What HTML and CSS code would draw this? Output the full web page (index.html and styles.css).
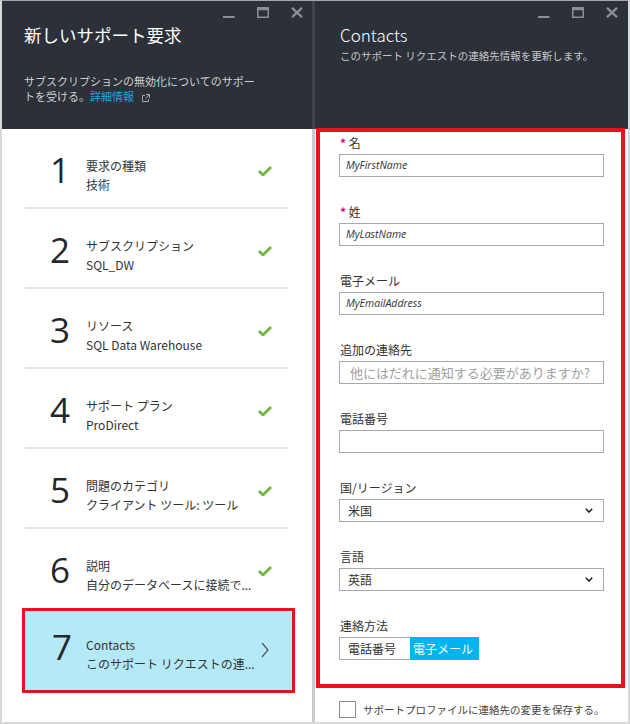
FILE: index.html
```html
<!DOCTYPE html>
<html lang="ja">
<head>
<meta charset="utf-8">
<title>新しいサポート要求</title>
<link rel="stylesheet" href="styles.css">
</head>
<body>
<div class="frame">
  <section class="blade blade-left">
    <header class="blade-head">
      <div class="controls">
        <svg class="ctl" viewBox="0 0 12 11" width="12" height="11"><rect x="0" y="9" width="11.5" height="2" fill="#8b8e93"/></svg>
        <svg class="ctl" viewBox="0 0 12 11" width="12" height="11"><path fill="#8b8e93" fill-rule="evenodd" d="M0 0H12V11H0Z M1.5 3.2H10.5V9.5H1.5Z"/></svg>
        <svg class="ctl" viewBox="0 0 12 11" width="12" height="11"><path stroke="#8b8e93" stroke-width="2.3" d="M1 0.8L11 10.2M11 0.8L1 10.2"/></svg>
      </div>
      <h1 class="title">新しいサポート要求</h1>
      <p class="desc"><span class="desc-line">サブスクリプションの無効化についてのサポー</span><span class="desc-line">トを受ける。<a class="link">詳細情報</a><svg class="ext" viewBox="0 0 8 8" width="8" height="8"><path fill="none" stroke="#a3a6ab" stroke-width="1" d="M3 1.5H0.5V7.5H6.5V5M4 0.5H7.5V4M7.5 0.5L3.5 4.5"/></svg></span></p>
    </header>
    <ol class="steps">
      <li class="step">
        <span class="num">1</span>
        <div class="step-text"><div>要求の種類</div><div>技術</div></div>
        <svg class="check" viewBox="0 0 14 10" width="14" height="10"><polyline points="1,5 5,9 13,1" fill="none" stroke="#6db33f" stroke-width="2.8"/></svg>
      </li>
      <li class="step">
        <span class="num">2</span>
        <div class="step-text"><div>サブスクリプション</div><div>SQL_DW</div></div>
        <svg class="check" viewBox="0 0 14 10" width="14" height="10"><polyline points="1,5 5,9 13,1" fill="none" stroke="#6db33f" stroke-width="2.8"/></svg>
      </li>
      <li class="step">
        <span class="num">3</span>
        <div class="step-text"><div>リソース</div><div>SQL Data Warehouse</div></div>
        <svg class="check" viewBox="0 0 14 10" width="14" height="10"><polyline points="1,5 5,9 13,1" fill="none" stroke="#6db33f" stroke-width="2.8"/></svg>
      </li>
      <li class="step">
        <span class="num">4</span>
        <div class="step-text"><div>サポート プラン</div><div>ProDirect</div></div>
        <svg class="check" viewBox="0 0 14 10" width="14" height="10"><polyline points="1,5 5,9 13,1" fill="none" stroke="#6db33f" stroke-width="2.8"/></svg>
      </li>
      <li class="step">
        <span class="num">5</span>
        <div class="step-text"><div>問題のカテゴリ</div><div>クライアント ツール: ツール</div></div>
        <svg class="check" viewBox="0 0 14 10" width="14" height="10"><polyline points="1,5 5,9 13,1" fill="none" stroke="#6db33f" stroke-width="2.8"/></svg>
      </li>
      <li class="step step-last">
        <span class="num">6</span>
        <div class="step-text"><div>説明</div><div>自分のデータベースに接続で...</div></div>
        <svg class="check" viewBox="0 0 14 10" width="14" height="10"><polyline points="1,5 5,9 13,1" fill="none" stroke="#6db33f" stroke-width="2.8"/></svg>
      </li>
      <li class="step step-active">
        <span class="num">7</span>
        <div class="step-text"><div>Contacts</div><div>このサポート リクエストの連...</div></div>
        <svg class="chev" viewBox="0 0 8 16" width="8" height="16"><polyline points="1,1 7,8 1,15" fill="none" stroke="#555" stroke-width="1.2"/></svg>
      </li>
    </ol>
  </section>

  <section class="blade blade-right">
    <header class="blade-head head-right">
      <div class="controls">
        <svg class="ctl" viewBox="0 0 12 11" width="12" height="11"><rect x="0" y="9" width="11.5" height="2" fill="#8b8e93"/></svg>
        <svg class="ctl" viewBox="0 0 12 11" width="12" height="11"><path fill="#8b8e93" fill-rule="evenodd" d="M0 0H12V11H0Z M1.5 3.2H10.5V9.5H1.5Z"/></svg>
        <svg class="ctl" viewBox="0 0 12 11" width="12" height="11"><path stroke="#8b8e93" stroke-width="2.3" d="M1 0.8L11 10.2M11 0.8L1 10.2"/></svg>
      </div>
      <h2 class="title-en">Contacts</h2>
      <p class="subtitle">このサポート リクエストの連絡先情報を更新します。</p>
    </header>

    <div class="form-box">
      <div class="field">
        <label><span class="req">*</span> 名</label>
        <div class="input value">MyFirstName</div>
      </div>
      <div class="field">
        <label><span class="req">*</span> 姓</label>
        <div class="input value">MyLastName</div>
      </div>
      <div class="field">
        <label>電子メール</label>
        <div class="input value">MyEmailAddress</div>
      </div>
      <div class="field">
        <label>追加の連絡先</label>
        <div class="input placeholder">他にはだれに通知する必要がありますか?</div>
      </div>
      <div class="field">
        <label>電話番号</label>
        <div class="input"></div>
      </div>
      <div class="field">
        <label>国/リージョン</label>
        <div class="input select"><span>米国</span><svg viewBox="0 0 8 5" width="8" height="5"><polyline points="0.8,0.8 4,4 7.2,0.8" fill="none" stroke="#222" stroke-width="1.6"/></svg></div>
      </div>
      <div class="field">
        <label>言語</label>
        <div class="input select"><span>英語</span><svg viewBox="0 0 8 5" width="8" height="5"><polyline points="0.8,0.8 4,4 7.2,0.8" fill="none" stroke="#222" stroke-width="1.6"/></svg></div>
      </div>
      <div class="field">
        <label>連絡方法</label>
        <div class="toggle">
          <span class="seg seg-phone">電話番号</span>
          <span class="seg seg-on">電子メール</span>
        </div>
      </div>
    </div>

    <div class="save-row">
      <span class="checkbox"></span>
      <span class="save-text">サポートプロファイルに連絡先の変更を保存する。</span>
    </div>
  </section>
</div>
</body>
</html>
```

FILE: styles.css
```css
* { box-sizing: border-box; margin: 0; padding: 0; }
html, body { width: 630px; height: 724px; overflow: hidden; background: #fff; }
body { font-family: "Segoe UI", "Noto Sans CJK JP", sans-serif; color: #333; }

.frame {
  display: flex;
  width: 630px;
  height: 724px;
  border-style: solid;
  border-color: #d9d9d9;
  border-width: 1px 2px 2px 2px;
  border-top-color: #a4a6a9;
  background: #fff;
}

.blade { display: flex; flex-direction: column; background: #fff; }
.blade-left { width: 313px; border-right: 3px solid #cbcbcb; }
.blade-right { flex: 1; }

.blade-head {
  height: 128px;
  background: #2c3038;
  padding: 6px 9px 0 22px;
  display: flex;
  flex-direction: column;
}
.blade-left .blade-head { margin-right: -3px; border-right: 3px solid #3f434a; }
.head-right { padding: 6px 10px 0 25px; }

.controls { display: flex; justify-content: flex-end; gap: 22px; height: 12px; }
.ctl { display: block; }

.title {
  margin-top: 3px;
  font-size: 17.5px;
  line-height: 26px;
  font-weight: 400;
  color: #fff;
}
.desc {
  margin-top: 25px;
  font-size: 11px;
  color: #cfd0d2;
}
.desc-line { display: block; height: 14px; line-height: 16px; }
.desc-line + .desc-line { margin-top: 1px; }
.link { color: #1ea5e3; }
.ext { margin-left: 8px; vertical-align: -1px; }

.title-en {
  margin-top: 3px;
  font-size: 17px;
  line-height: 26px;
  font-weight: 300;
  color: #fff;
}
.subtitle {
  font-size: 10.5px;
  line-height: 16px;
  color: #c4c6c9;
}

/* steps */
.steps { list-style: none; margin: 0 24px 0 23px; }
.step {
  display: flex;
  align-items: flex-start;
  height: 80px;
  border-bottom: 2px solid #e3e3e3;
}
.step-last { border-bottom: none; height: 79px; }
.num {
  width: 36px;
  margin-left: 25px;
  margin-top: 21px;
  font-family: "Open Sans", sans-serif;
  font-size: 35px;
  line-height: 40px;
  color: #24272c;
}
.step-text {
  flex: 1;
  padding-top: 27px;
  font-size: 12px;
  line-height: 19px;
  color: #333;
  white-space: nowrap;
}
.check { margin-top: 37px; margin-right: 16px; }

.step-active {
  height: 85px;
  margin: 0 -7px 0 -3px;
  border: 3px solid #e8141d;
  background: #b4e9f8;
}
.step-active .num { margin-left: 27px; width: 34px; margin-top: 16px; }
.step-active .step-text { padding-top: 24px; }
.chev { margin-top: 31px; margin-right: 23px; }

/* form */
.form-box {
  margin: -1px 3px 0 1px;
  border: 4px solid #e8141d;
  padding: 3px 17px 24px 19px;
  display: flex;
  flex-direction: column;
  gap: 27px;
}
.field label {
  display: block;
  font-size: 12px;
  line-height: 16px;
  padding-left: 1px;
  margin-bottom: 3px;
  color: #333;
}
.req { color: #e3008c; font-weight: 700; }
.input {
  height: 23px;
  border: 1px solid #a9a9a9;
  background: #fff;
  line-height: 21px;
  padding: 0 6px;
  white-space: nowrap;
}
.value {
  font-family: "Open Sans", sans-serif;
  font-style: italic;
  font-size: 10.5px;
  color: #333;
}
.placeholder {
  padding-left: 10px;
  font-size: 13px;
  color: #9f9f9f;
}
.select {
  display: flex;
  align-items: center;
  justify-content: space-between;
  padding: 0 10px 0 8px;
  font-size: 12px;
  color: #333;
}
.toggle { display: flex; }
.seg {
  height: 23px;
  line-height: 21px;
  font-size: 12px;
  border: 1px solid #a9a9a9;
}
.seg-phone { width: 71px; padding-left: 8px; color: #333; border-right: none; }
.seg-on { width: 69px; padding-left: 2px; background: #00b4f0; border-color: #00b4f0; color: #fff; }

.save-row {
  display: flex;
  align-items: center;
  gap: 7px;
  margin: 13px 0 0 24px;
}
.checkbox {
  width: 17px;
  height: 17px;
  border: 1px solid #8a8a8a;
  background: #fff;
}
.save-text { font-size: 10.5px; line-height: 17px; color: #444; }
```
